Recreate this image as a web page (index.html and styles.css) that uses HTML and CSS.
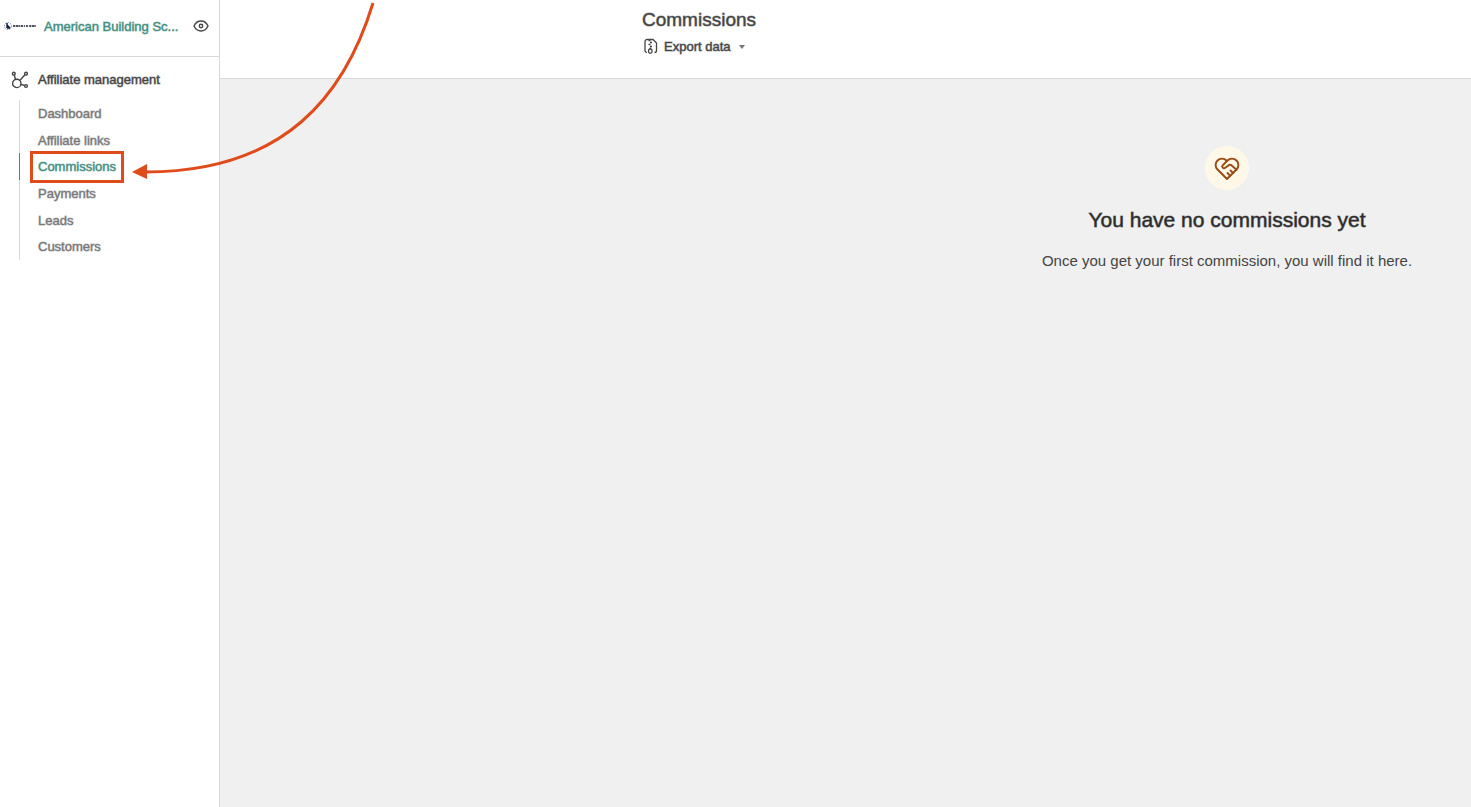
FILE: index.html
```html
<!DOCTYPE html>
<html lang="en">

<head>
  <meta charset="UTF-8">
  <meta name="viewport" content="width=device-width, initial-scale=1.0">
  <title>Commissions</title>
  <link rel="stylesheet" href="styles.css">
</head>

<body>
  <aside class="sidebar">
    <div class="school">
      <svg class="school-logo" viewBox="0 0 32 10" aria-hidden="true">
        <circle cx="4" cy="5" r="3.5" fill="none" stroke="#6f95c4" stroke-dasharray="1.6 1" />
        <path d="M3 2v5M3 4l3 3M3 7h3" fill="none" stroke="#14182c" stroke-width="1.4" />
        <path d="M9 5h23" fill="none" stroke="#14182c" stroke-width="1.6"
          stroke-dasharray="2 .6 3 .5 1 .6 2.4 .8 1 1 2 1.2" />
      </svg>
      <a class="school-name" href="#">American Building Sc...</a>
      <button class="preview" type="button" aria-label="Preview">
        <svg width="16" height="12" viewBox="0 0 16 12" fill="none" stroke="#444" stroke-width="1.4">
          <path d="M1 6C2.6 2.6 5 1 8 1s5.400 1.600 7 5c-1.600 3.400-4 5-7 5S2.600 9.400 1 6z" />
          <circle cx="8" cy="6" r="1.700" />
        </svg>
      </button>
    </div>

    <nav>
      <h2 class="nav-title">
        <svg width="18" height="18" viewBox="0 0 18 18" fill="none" stroke="#444" stroke-width="1.4">
          <circle cx="5.800" cy="12.400" r="4.200" />
          <circle cx="2.800" cy="2.700" r="1.400" />
          <circle cx="15" cy="2.700" r="1.400" />
          <circle cx="15" cy="15" r="1.400" />
          <path d="M3.200 4l1.300 4.300M14 3.800L8.900 9.300M10 13.300l3.600 1.200" />
        </svg>
        Affiliate management
      </h2>
      <ul class="nav-list">
        <li><a href="#">Dashboard</a></li>
        <li><a href="#">Affiliate links</a></li>
        <li class="active"><a href="#" aria-current="page">Commissions</a></li>
        <li><a href="#">Payments</a></li>
        <li><a href="#">Leads</a></li>
        <li><a href="#">Customers</a></li>
      </ul>
    </nav>
  </aside>

  <main class="main">
    <header class="topbar">
      <div class="container">
        <h1>Commissions</h1>
        <button class="export" type="button">
          <svg width="14" height="16" viewBox="0 0 14 16" fill="none" stroke="#444" stroke-width="1.300">
            <path d="M3 14.500a2 2 0 0 1-2-2v-9a2 2 0 0 1 2-2h6L12.500 5v7.500a2 2 0 0 1-2 2" />
            <path d="M4.500 2.500h2M6 4.500h2M4.500 6.500h2M6 8.500h2" />
            <path d="M6.300 9.500v1.500" />
            <rect x="4.600" y="11" width="3.400" height="4.200" rx="1.500" />
          </svg>
          <span>Export data</span>
          <svg class="caret" width="6" height="4" viewBox="0 0 6 4" fill="#777">
            <path d="M0 0h6L3 4z" />
          </svg>
        </button>
      </div>
    </header>

    <section class="content">
      <div class="container empty">
        <div class="empty-icon">
          <svg width="26" height="24" viewBox="0 0 26 24" fill="none" stroke="#9a4a16" stroke-width="1.900"
            stroke-linecap="round" stroke-linejoin="round">
            <path d="M13 22L3.500 12.500a6.300 6.300 0 0 1 0-9 6.300 6.300 0 0 1 9 0l.5.5.5-.5a6.300 6.300 0 0 1 9 0 6.300 6.300 0 0 1 0 9L13 22z" />
            <path d="M13 4L8.700 8.300a1.700 1.700 0 0 0 0 2.400c.7.700 1.800.7 2.600.1L14 8.700a3 3 0 0 1 4 .1l4.500 4" />
            <path d="M16.500 13.500l2.700 2.600M13.500 16l2.700 2.800" />
          </svg>
        </div>
        <h2>You have no commissions yet</h2>
        <p>Once you get your first commission, you will find it here.</p>
      </div>
    </section>
  </main>

  <svg class="arrow" width="250" height="182" viewBox="0 0 250 182" aria-hidden="true">
    <path d="M241 3C213 95 153 172 14 172" fill="none" stroke="#df4b1b" stroke-width="3" />
    <path d="M0 172l15-8v15z" fill="#df4b1b" />
  </svg>
</body>

</html>
```
FILE: styles.css
```css
* {
  box-sizing: border-box;
}

body {
  display: flex;
  min-height: 100vh;
  margin: 0;
  font-family: "Liberation Sans", Arial, sans-serif;
  font-size: 13px;
  color: #444;
  background-color: #fff;
}

h1,
h2,
p,
ul {
  margin: 0;
  padding: 0;
}

a {
  color: inherit;
  text-decoration: none;
}

button {
  padding: 0;
  border: none;
  background: none;
  font: inherit;
  color: inherit;
  cursor: pointer;
}

svg {
  display: block;
  flex-shrink: 0;
}

/* Medium weight: regular letters with a soft outline */
h1,
h2,
.sidebar a,
.export span {
  font-weight: 400;
  -webkit-text-stroke: 1px color-mix(in srgb, currentColor 50%, transparent);
}

/* Sidebar */
.sidebar {
  flex: 0 0 220px;
  min-width: 0;
  border-right: 1px solid #d8d8d8;
}

.school {
  display: flex;
  align-items: center;
  height: 57px;
  padding: 0 10px 4px 4px;
  border-bottom: 1px solid #d8d8d8;
}

.school-logo {
  width: 32px;
  height: 10px;
  margin-right: 8px;
}

.school-name {
  flex: 1;
  white-space: nowrap;
  color: #3f8d80;
}

.nav-title {
  display: flex;
  align-items: center;
  gap: 9px;
  padding: 14px 11px 11px;
  font-size: 13px;
  line-height: 18px;
}

.nav-list {
  display: flex;
  flex-direction: column;
  height: 160px;
  margin-left: 19px;
  border-left: 1px solid #d8d8d8;
  list-style: none;
  color: #777;
}

.nav-list li {
  display: flex;
  flex: 1;
  align-items: center;
  margin-left: -1px;
  padding-left: 19px;
}

.nav-list .active {
  position: relative;
  box-shadow: inset 1px 0 #3f8d80;
  color: #3f8d80;
}

.nav-list .active::after {
  content: "";
  position: absolute;
  top: -2px;
  left: 11px;
  box-sizing: border-box;
  width: 94px;
  height: 32px;
  border: 3px solid #df4b1b;
}

/* Main */
.main {
  display: flex;
  flex: 1;
  flex-direction: column;
  min-width: 0;
  overflow: hidden;
}

.topbar,
.content {
  padding-left: 422px;
}

.topbar {
  height: 79px;
  padding-top: 9px;
  border-bottom: 1px solid #d8d8d8;
}

.container {
  width: 1170px;
}

h1 {
  font-size: 19px;
  line-height: 22px;
}

.export {
  display: flex;
  align-items: center;
  gap: 6px;
  margin: 7px 0 0 2px;
}

.caret {
  margin: 2px 0 0 2px;
}

.content {
  flex: 1;
  background-color: #f0f0f0;
}

.empty {
  display: flex;
  flex-direction: column;
  align-items: center;
  padding-top: 67px;
}

.empty-icon {
  display: flex;
  align-items: center;
  justify-content: center;
  width: 44px;
  height: 44px;
  padding-top: 2px;
  border-radius: 50%;
  background-color: #fff8e8;
}

.empty h2 {
  margin-top: 17px;
  font-size: 21px;
  line-height: 26px;
  color: #2b2b2b;
}

.empty p {
  margin-top: 18px;
  font-size: 15px;
  line-height: 20px;
}

/* Arrow pointing at the highlighted menu item */
.arrow {
  position: absolute;
  top: 0;
  left: 132px;
  pointer-events: none;
}
```
